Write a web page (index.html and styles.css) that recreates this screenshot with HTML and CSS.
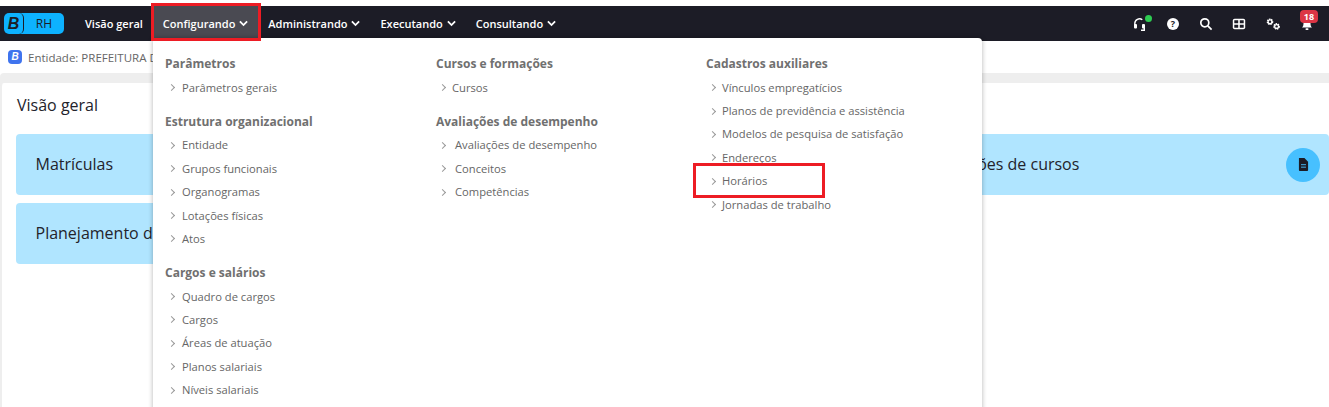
FILE: index.html
```html
<!DOCTYPE html>
<html lang="pt">
<head>
<meta charset="utf-8">
<title>RH</title>
<link rel="stylesheet" href="styles.css">
</head>
<body>
<header class="navbar">
  <div class="logo"><span class="logo-b">B</span><span class="logo-rh">RH</span></div>
  <nav class="nav-main">
    <a class="nav-item">Visão geral</a>
    <a class="nav-item nav-active">Configurando <svg class="chev" viewBox="0 0 10 7"><path d="M1 1.2 5 5.2 9 1.2"/></svg></a>
    <a class="nav-item">Administrando <svg class="chev" viewBox="0 0 10 7"><path d="M1 1.2 5 5.2 9 1.2"/></svg></a>
    <a class="nav-item">Executando <svg class="chev" viewBox="0 0 10 7"><path d="M1 1.2 5 5.2 9 1.2"/></svg></a>
    <a class="nav-item">Consultando <svg class="chev" viewBox="0 0 10 7"><path d="M1 1.2 5 5.2 9 1.2"/></svg></a>
  </nav>
  <div class="nav-tools">
    <span class="tool tool-head">
      <svg viewBox="0 0 14 14" width="14" height="14"><path class="ln" d="M1.800 8V6.500a4.700 4.700 0 0 1 7.500-3.800"/><rect class="fl" x="1" y="7" width="3" height="4.500" rx="1"/><rect class="fl" x="9" y="7" width="3" height="4.500" rx="1"/><path class="ln" d="M11.300 11v2.300H8"/></svg>
      <i class="status-dot"></i>
    </span>
    <svg class="tool" viewBox="0 0 14 14" width="14" height="14"><circle class="fl" cx="7" cy="7" r="6"/><text x="7" y="10" class="qmark">?</text></svg>
    <svg class="tool" viewBox="0 0 14 14" width="14" height="14"><circle class="ln2" cx="5.800" cy="5.800" r="4"/><path class="ln2" d="M8.800 8.800 12.600 12.600"/></svg>
    <svg class="tool" viewBox="0 0 14 14" width="14" height="14"><rect class="fl" x=".8" y="1.800" width="12.400" height="10.400" rx="1.800"/><path class="cell" d="M2.300 3.300h3.900v2.900H2.300zM7.800 3.300h3.900v2.900H7.800zM2.300 7.800h3.900v2.900H2.300zM7.800 7.800h3.900v2.900H7.800z"/></svg>
    <svg class="tool" viewBox="0 0 16 14" width="16" height="14"><circle class="ln3" cx="5" cy="4.800" r="2.500"/><circle class="hub" cx="5" cy="4.800" r="1.200"/><circle class="ln3" cx="11.600" cy="9.400" r="2.500"/><circle class="hub" cx="11.600" cy="9.400" r="1.200"/></svg>
    <span class="tool tool-bell">
      <svg viewBox="0 0 14 14" width="14" height="14"><path class="fl" d="M2 10.500c1.200-1 1.500-2.300 1.500-4.200A3.500 3.500 0 0 1 10.500 6.300c0 1.900.3 3.200 1.500 4.200z"/><rect class="fl" x="5.500" y="11.300" width="3" height="1.700" rx=".8"/></svg>
      <b class="badge">18</b>
    </span>
  </div>
</header>

<div class="entity">
  <span class="entity-icon">B</span>
  <span>Entidade: PREFEITURA D</span>
</div>

<main class="panel">
  <h1 class="panel-title">Visão geral</h1>
  <div class="cards">
    <div class="card">Matrículas</div>
    <div class="card"></div>
    <div class="card card-end">ões de cursos
      <span class="card-btn"><svg viewBox="0 0 12 14" width="11" height="13"><path class="doc" d="M1 0h6l4 4v9a1 1 0 0 1-1 1H2a1 1 0 0 1-1-1z"/><path class="doc-l" d="M3.300 7.200h5.400M3.300 9.900h5.400"/></svg></span>
    </div>
    <div class="card">Planejamento d</div>
  </div>
</main>

<section class="menu">
  <div class="menu-col">
    <h2>Parâmetros</h2>
    <ul><li>Parâmetros gerais</li></ul>
    <h2>Estrutura organizacional</h2>
    <ul><li>Entidade</li><li>Grupos funcionais</li><li>Organogramas</li><li>Lotações físicas</li><li>Atos</li></ul>
    <h2>Cargos e salários</h2>
    <ul><li>Quadro de cargos</li><li>Cargos</li><li>Áreas de atuação</li><li>Planos salariais</li><li>Níveis salariais</li></ul>
  </div>
  <div class="menu-col menu-col-mid">
    <h2>Cursos e formações</h2>
    <ul><li>Cursos</li></ul>
    <h2>Avaliações de desempenho</h2>
    <ul class="list-wide"><li>Avaliações de desempenho</li><li>Conceitos</li><li>Competências</li></ul>
  </div>
  <div class="menu-col menu-col-end">
    <h2>Cadastros auxiliares</h2>
    <ul><li>Vínculos empregatícios</li><li>Planos de previdência e assistência</li><li>Modelos de pesquisa de satisfação</li><li>Endereços</li><li>Horários</li><li>Jornadas de trabalho</li></ul>
  </div>
</section>

<div class="mark mark-nav"></div>
<div class="mark mark-item"></div>
</body>
</html>
```
FILE: styles.css
```css
* { box-sizing: border-box; }
html, body { margin: 0; height: 100%; }
body {
  position: relative;
  height: 407px;
  overflow: hidden;
  padding-top: 6px;
  background: #fff;
  font-family: "Open Sans", sans-serif;
  color: #23232b;
}
.navbar {
  display: flex;
  align-items: center;
  height: 35px;
  padding-left: 4px;
  background: #1c1c26;
  color: #fff;
}
.logo {
  display: flex;
  width: 60px;
  height: 21px;
  border-radius: 5px;
  background: #0db2ff;
  color: #1c1c26;
  font-size: 12px;
  line-height: 21px;
}
.logo-b {
  width: 20px;
  border-right: 1px solid #1c1c26;
  border-radius: 5px;
  text-align: center;
  font: italic 700 16px/21px "Liberation Sans", sans-serif;
}
.logo-rh { flex: 1; text-align: center; font-weight: 500; }
.nav-main { display: flex; height: 100%; margin-left: 11px; }
.nav-item {
  display: flex;
  align-items: center;
  gap: 4px;
  padding: 0 10px;
  font-size: 11px;
  font-weight: 600;
  white-space: nowrap;
}
.nav-active { background: #4a4a52; }
.chev { width: 9px; height: 7px; fill: none; stroke: #fff; stroke-width: 2; }
.nav-tools { display: flex; align-items: center; gap: 19px; margin-left: auto; padding-right: 15px; }
.tool { position: relative; display: block; }
.tool svg { display: block; }
.fl { fill: #fff; }
.cell { fill: #1c1c26; }
.hub { fill: #1c1c26; }
.ln { fill: none; stroke: #fff; stroke-width: 1.4; }
.ln2 { fill: none; stroke: #fff; stroke-width: 1.7; }
.ln3 { fill: #fff; stroke: #fff; stroke-width: 1.6; stroke-dasharray: 1.4 .7; }
.qmark { fill: #1c1c26; font: 700 9px "Open Sans", sans-serif; text-anchor: middle; }
.status-dot {
  position: absolute;
  top: -2px;
  right: -5px;
  width: 7px;
  height: 7px;
  border-radius: 50%;
  background: #2ecc52;
}
.badge {
  position: absolute;
  top: -7px;
  left: 0;
  width: 18px;
  height: 13px;
  border-radius: 4px;
  background: #dc3545;
  font-size: 9px;
  font-weight: 700;
  line-height: 13px;
  text-align: center;
}
.entity {
  display: flex;
  align-items: center;
  gap: 6px;
  height: 32px;
  padding-left: 8px;
  font-size: 11.5px;
  color: #666;
  white-space: nowrap;
}
.entity-icon {
  width: 14px;
  height: 14px;
  border-radius: 4px;
  background: #3f74ee;
  color: #fff;
  font: italic 700 10px/14px "Liberation Sans", sans-serif;
  text-align: center;
}
.panel {
  height: 324px;
  margin-top: 10px;
  padding: 11px 0 0 14px;
  border-left: 2px solid #eee;
  box-shadow: 0 -10px 0 #eee;
  border-radius: 4px 0 0 0;
  background: #fff;
}
.panel-title { margin: 0 0 18px 1px; font-size: 16px; font-weight: 400; line-height: 22px; }
.cards { display: grid; grid-template-columns: repeat(3, 1fr); gap: 8px; }
.card {
  display: flex;
  align-items: center;
  justify-content: space-between;
  height: 61px;
  padding: 0 9px 2px 19.5px;
  border-radius: 4px;
  background: #b0e5ff;
  font-size: 16px;
}
.card-end { padding-left: 80.5px; }
.card-btn {
  display: flex;
  align-items: center;
  justify-content: center;
  width: 34px;
  height: 34px;
  margin-bottom: -2px;
  border-radius: 50%;
  background: #47c0ff;
}
.doc { fill: #1c1c26; }
.doc-l { stroke: #47c0ff; stroke-width: 1; }
.menu {
  position: absolute;
  top: 38px;
  left: 153px;
  display: grid;
  grid-template-columns: 271px 270px 1fr;
  width: 829px;
  height: 380px;
  padding: 16px 12px 0;
  border-radius: 4px;
  background: #fff;
  box-shadow: 0 0 5px rgba(0, 0, 0, .3);
}
.menu h2 {
  margin: 0 0 1.7px;
  font-size: 12px;
  font-weight: 700;
  line-height: 20px;
  color: #707070;
}
.menu ul { margin: 0 0 12.6px; padding: 0; list-style: none; }
.menu li {
  position: relative;
  height: 23.4px;
  padding-left: 17px;
  font-size: 11.2px;
  line-height: 23px;
  color: #666;
}
.menu-col-mid li, .menu-col-end li { padding-left: 16px; }
.menu-col-mid .list-wide li { padding-left: 19px; }
.menu li::before {
  content: "";
  position: absolute;
  top: 9.500px;
  left: 4px;
  width: 4px;
  height: 4px;
  border-top: 1px solid #999;
  border-right: 1px solid #999;
  transform: rotate(45deg);
}
.mark { position: absolute; border: 3px solid #ed1c24; }
.mark-nav { top: 3px; left: 151px; width: 110px; height: 38px; }
.mark-item { top: 163px; left: 693px; width: 132px; height: 35px; }
```
